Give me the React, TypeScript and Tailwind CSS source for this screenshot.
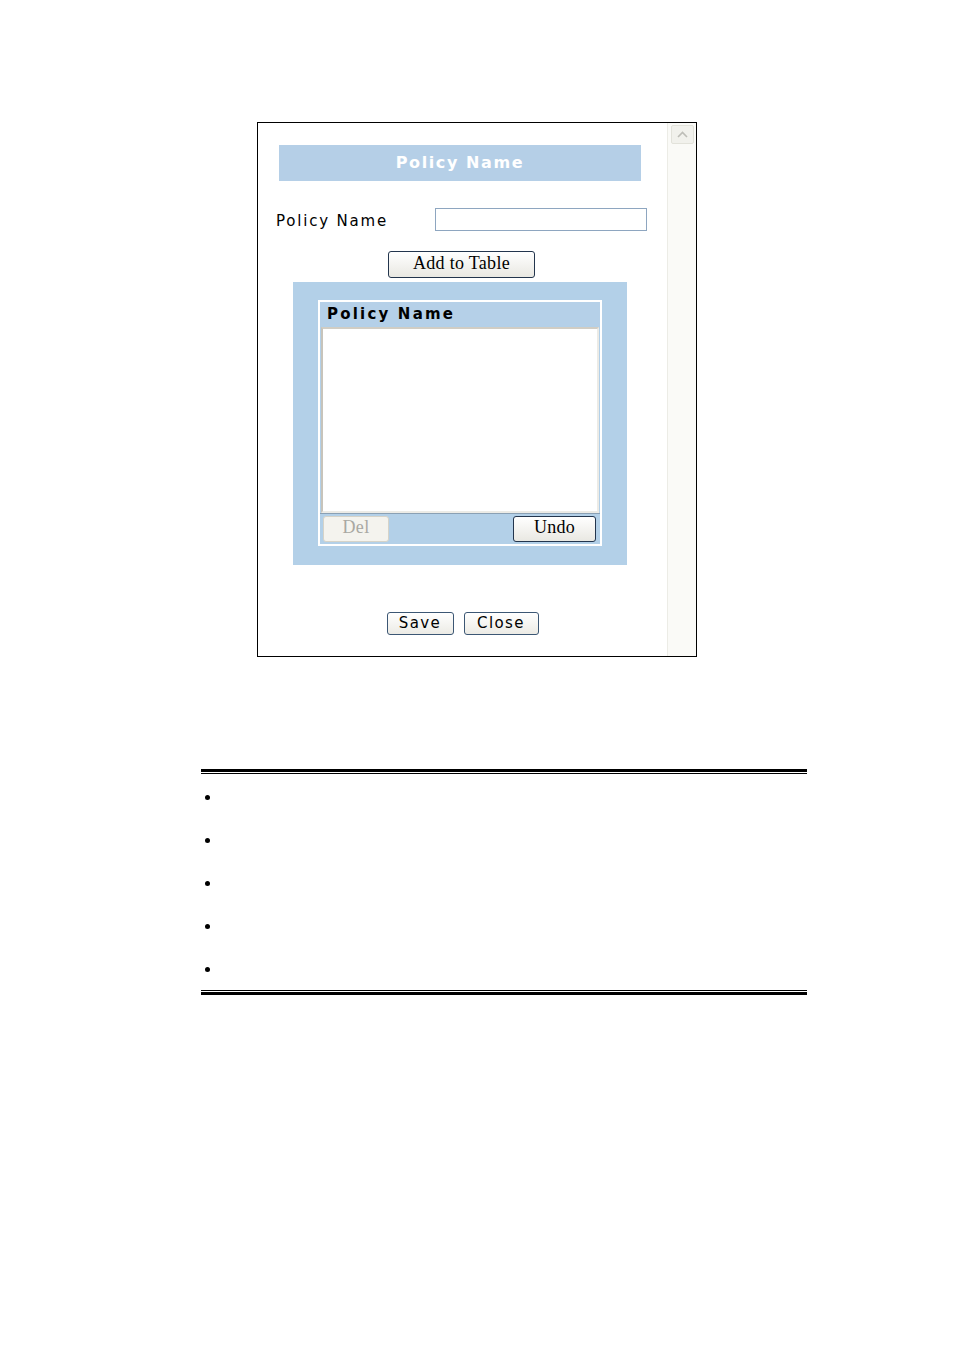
import React from "react";

const verdana = { fontFamily: '"DejaVu Sans", Verdana, sans-serif' };

function SerifButton({ label, disabled, className }: { label: string; disabled?: boolean; className?: string }) {
  return (
    <button
      disabled={disabled}
      className={
        "flex items-center justify-center pb-[4px] rounded-[3px] font-['Liberation_Serif',serif] text-[18px] tracking-[0.3px] leading-none " +
        (disabled
          ? "border border-[#d6d3c8] bg-[#f4f3ee] text-[#a9a8a2] "
          : "border border-[#23354d] bg-gradient-to-b from-white to-[#e9e8e2] text-black ") +
        (className ?? "")
      }
    >
      {label}
    </button>
  );
}

function SansButton({ label, className }: { label: string; className?: string }) {
  return (
    <button
      style={verdana}
      className={
        "flex items-center justify-center rounded-[3px] border border-[#3c5774] bg-gradient-to-b from-white to-[#ecebe5] text-[15px] tracking-[1.4px] text-black leading-none " +
        (className ?? "")
      }
    >
      {label}
    </button>
  );
}

export default function App() {
  const bullets = [0, 1, 2, 3, 4];
  return (
    <div className="w-[954px] h-[1350px] bg-white">
      <div className="pt-[122px] pl-[257px]">
        {/* dialog frame */}
        <div className="flex w-[440px] h-[535px] border border-black bg-white">
          <div className="flex-1 flex flex-col">
            {/* title bar */}
            <div
              style={verdana}
              className="ml-[21px] mt-[22px] w-[362px] h-[36px] bg-[#b5cfe7] flex items-center justify-center text-white font-bold text-[16px] tracking-[1.6px]"
            >
              Policy Name
            </div>

            {/* name row */}
            <div className="mt-[27px] h-[23px] flex items-center">
              <span style={verdana} className="ml-[18px] mt-[3px] w-[159px] text-[15px] leading-none tracking-[1.8px] text-black">
                Policy Name
              </span>
              <input className="w-[212px] h-[23px] border border-[#8ea6c0] bg-white outline-none" />
            </div>

            <div className="mt-[20px] ml-[130px]">
              <SerifButton label="Add to Table" className="w-[147px] h-[27px]" />
            </div>

            {/* table panel */}
            <div className="mt-[4px] ml-[35px] w-[334px] h-[283px] bg-[#b3d0e8] pt-[18px] pl-[25px]">
              <div className="w-[284px] h-[246px] border-2 border-white flex flex-col">
                <div
                  style={verdana}
                  className="h-[24px] bg-[#b5d0e8] flex items-center pl-[7px] font-bold text-[15px] tracking-[2.2px] text-black"
                >
                  Policy Name
                </div>
                <div className="mt-[1px] mx-[1px] h-[186px] bg-white border-2 border-t-[#d1cdc4] border-l-[#c7c4bb] border-r-[#ecebe6] border-b-[#ecebe6]" />
                <div className="flex-1 flex items-center justify-between pl-[3px] pr-[4px] border-t border-[#8aa0b4]">
                  <SerifButton label="Del" disabled className="w-[66px] h-[26px]" />
                  <SerifButton label="Undo" className="w-[83px] h-[26px]" />
                </div>
              </div>
            </div>

            {/* actions */}
            <div className="mt-[47px] flex justify-center gap-[10px]">
              <SansButton label="Save" className="w-[67px] h-[23px]" />
              <SansButton label="Close" className="w-[75px] h-[23px]" />
            </div>
          </div>

          {/* scrollbar */}
          <div className="w-[29px] bg-[#fafaf7] border-l border-[#ecece6] pt-[2px] flex flex-col items-center">
            <div className="w-[23px] h-[19px] rounded-[2px] border border-[#e2e2da] bg-[#f1f1ec] flex items-center justify-center">
              <svg width="11" height="7" viewBox="0 0 11 7">
                <path d="M1 6 L5.5 1.5 L10 6" fill="none" stroke="#bdbdb7" strokeWidth="1.6" />
              </svg>
            </div>
          </div>
        </div>
      </div>

      {/* parameter table outline */}
      <div className="mt-[112px] ml-[201px] w-[606px]">
        <div className="h-[3px] bg-black" />
        <div className="mt-[1px] h-[1px] bg-black" />
        <ul className="pt-[21px] pb-[18px] flex flex-col gap-[38px]">
          {bullets.map((b) => (
            <li key={b} className="h-[5px] flex">
              <span className="ml-[4px] w-[5px] h-[5px] rounded-full bg-black" />
            </li>
          ))}
        </ul>
        <div className="h-[1px] bg-black" />
        <div className="mt-[1px] h-[3px] bg-black" />
      </div>
    </div>
  );
}
